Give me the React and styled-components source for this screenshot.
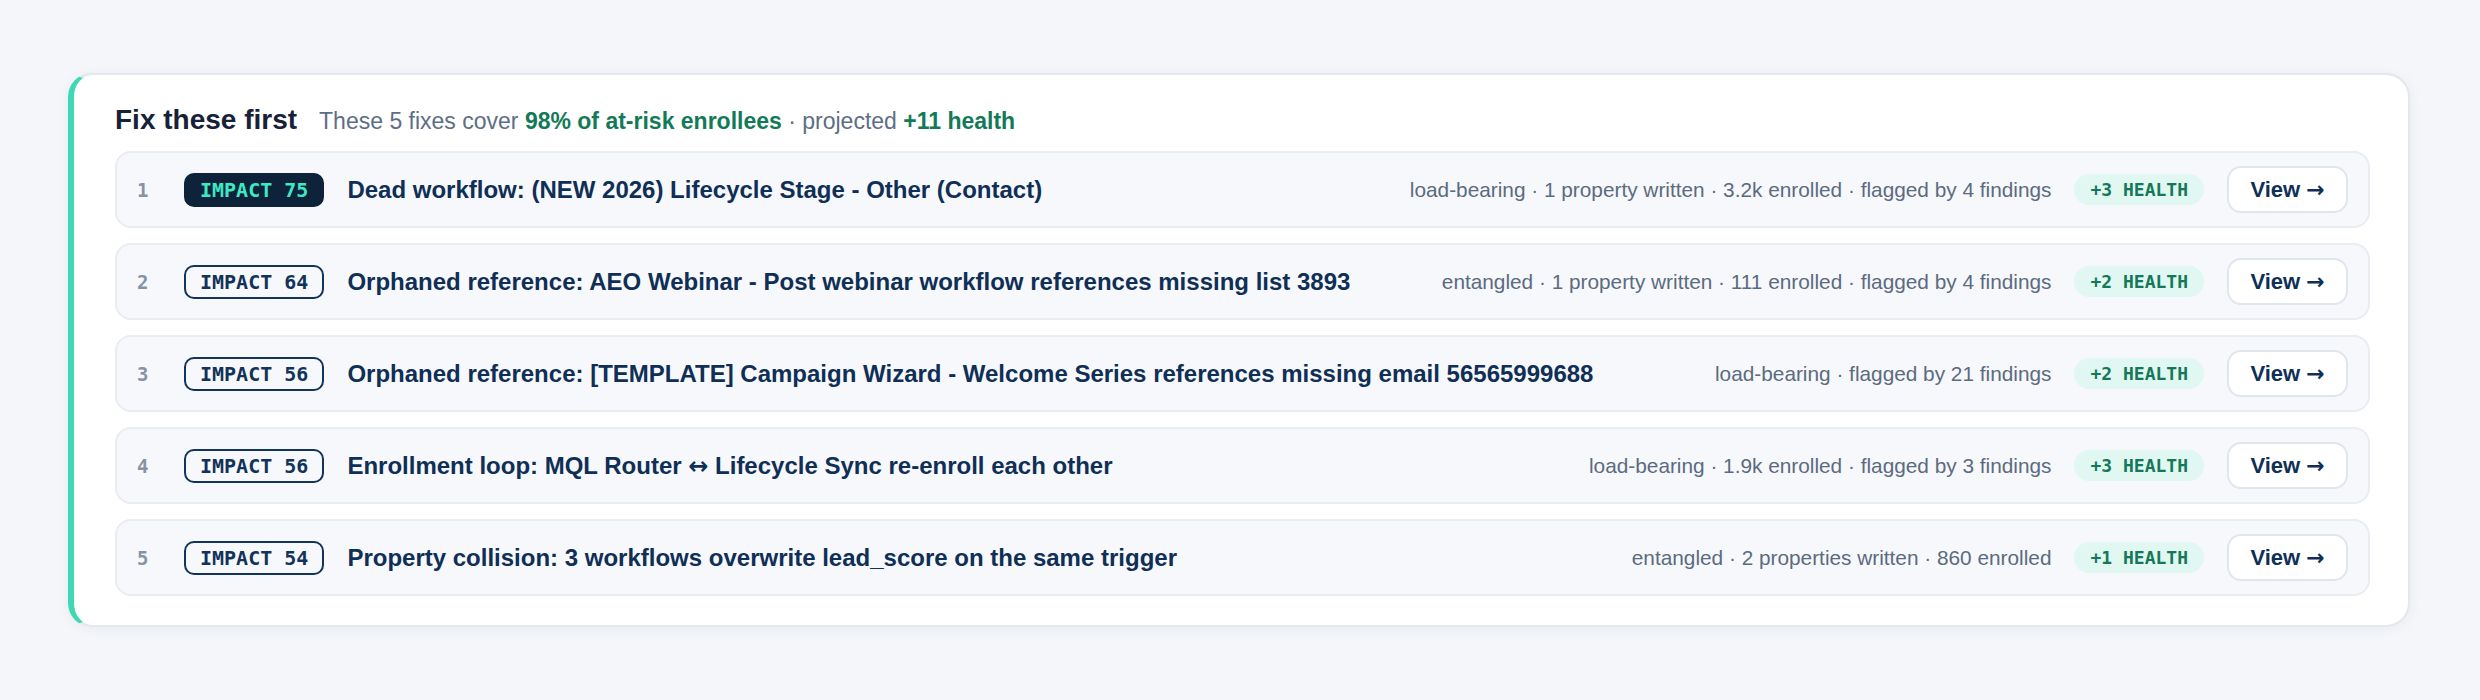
import React from 'react';
import styled, { createGlobalStyle } from 'styled-components';

const GlobalStyle = createGlobalStyle`
  body {
    margin: 0;
    background: #f4f6f9;
    font-family: "Liberation Sans", Arial, sans-serif;
  }
`;

const Page = styled.div`
  padding: 73px 70px 74px 68px;
`;

const Card = styled.section`
  background: #fff;
  border: 2px solid #e3e7ee;
  border-left: 6px solid #3fd8b6;
  border-radius: 24px;
  padding: 28px 38px 29px 41px;
  box-shadow: 0 2px 14px rgba(20, 40, 70, 0.05);
`;

const Header = styled.div`
  display: flex;
  align-items: baseline;
  gap: 22px;
  line-height: 34px;
  margin-bottom: 13px;
`;

const Title = styled.h2`
  margin: 0;
  font-size: 28px;
  font-weight: 700;
  color: #172238;
`;

const Summary = styled.span`
  font-size: 23px;
  color: #5e6e84;
`;

const Em = styled.b`
  color: #137a57;
`;

const List = styled.div`
  display: flex;
  flex-direction: column;
  gap: 15px;
`;

const Row = styled.div`
  display: flex;
  align-items: center;
  box-sizing: border-box;
  height: 77px;
  padding: 0 20px;
  background: #f7f8fb;
  border: 2px solid #e9ecf1;
  border-radius: 16px;
  gap: 23px;
`;

const Rank = styled.span`
  width: 24px;
  font-family: "DejaVu Sans Mono", monospace;
  font-weight: 700;
  font-size: 19px;
  color: #8693a5;
`;

const Impact = styled.span`
  box-sizing: border-box;
  height: 34px;
  display: inline-flex;
  align-items: center;
  padding: 0 14px;
  border-radius: 10px;
  border: 2px solid ${(p) => (p.$top ? '#0e2339' : '#12335a')};
  background: ${(p) => (p.$top ? '#0e2339' : 'transparent')};
  color: ${(p) => (p.$top ? '#3fe8c4' : '#12335a')};
  font-family: "DejaVu Sans Mono", monospace;
  font-weight: 700;
  font-size: 20px;
  white-space: nowrap;
  flex-shrink: 0;
`;

const Name = styled.span`
  flex: 1 1 auto;
  min-width: 0;
  font-size: 24px;
  font-weight: 700;
  color: #0f2f56;
  white-space: nowrap;
`;

// arrows come from DejaVu so they sit full-size on the text's mid line
const Arrow = styled.span`
  font-family: "DejaVu Sans", sans-serif;
  font-weight: 700;
`;

const Meta = styled.span`
  font-size: 20.8px;
  color: #5b6b80;
  white-space: nowrap;
  flex-shrink: 0;
`;

const Health = styled.span`
  height: 31px;
  display: inline-flex;
  align-items: center;
  padding: 0 16px;
  border-radius: 999px;
  background: #e0f8f1;
  color: #15785a;
  font-family: "DejaVu Sans Mono", monospace;
  font-weight: 700;
  font-size: 18px;
  white-space: nowrap;
  flex-shrink: 0;
`;

const ViewButton = styled.button`
  box-sizing: border-box;
  width: 121px;
  height: 47px;
  display: inline-flex;
  align-items: center;
  justify-content: center;
  gap: 6px;
  background: #fff;
  border: 2px solid #e1e6ed;
  border-radius: 14px;
  font-family: "Liberation Sans", Arial, sans-serif;
  font-size: 22px;
  font-weight: 700;
  color: #0f2f56;
  cursor: pointer;
  flex-shrink: 0;
`;

const fixes = [
  {
    impact: 75,
    name: ['Dead workflow: (NEW 2026) Lifecycle Stage - Other (Contact)'],
    meta: 'load-bearing · 1 property written · 3.2k enrolled · flagged by 4 findings',
    health: 3,
  },
  {
    impact: 64,
    name: ['Orphaned reference: AEO Webinar - Post webinar workflow references missing list 3893'],
    meta: 'entangled · 1 property written · 111 enrolled · flagged by 4 findings',
    health: 2,
  },
  {
    impact: 56,
    name: ['Orphaned reference: [TEMPLATE] Campaign Wizard - Welcome Series references missing email 56565999688'],
    meta: 'load-bearing · flagged by 21 findings',
    health: 2,
  },
  {
    impact: 56,
    name: ['Enrollment loop: MQL Router ', 'Lifecycle Sync re-enroll each other'],
    meta: 'load-bearing · 1.9k enrolled · flagged by 3 findings',
    health: 3,
  },
  {
    impact: 54,
    name: ['Property collision: 3 workflows overwrite lead_score on the same trigger'],
    meta: 'entangled · 2 properties written · 860 enrolled',
    health: 1,
  },
];

const App = () => (
  <Page>
    <GlobalStyle />
    <Card>
      <Header>
        <Title>Fix these first</Title>
        <Summary>
          These 5 fixes cover <Em>98% of at-risk enrollees</Em> · projected{' '}
          <Em>+11 health</Em>
        </Summary>
      </Header>
      <List>
        {fixes.map((fix, i) => (
          <Row key={i}>
            <Rank>{i + 1}</Rank>
            <Impact $top={i === 0}>IMPACT {fix.impact}</Impact>
            <Name>
              {fix.name[0]}
              {fix.name[1] && (
                <>
                  <Arrow>↔</Arrow> {fix.name[1]}
                </>
              )}
            </Name>
            <Meta>{fix.meta}</Meta>
            <Health>+{fix.health} HEALTH</Health>
            <ViewButton>
              View <Arrow>→</Arrow>
            </ViewButton>
          </Row>
        ))}
      </List>
    </Card>
  </Page>
);

export default App;
